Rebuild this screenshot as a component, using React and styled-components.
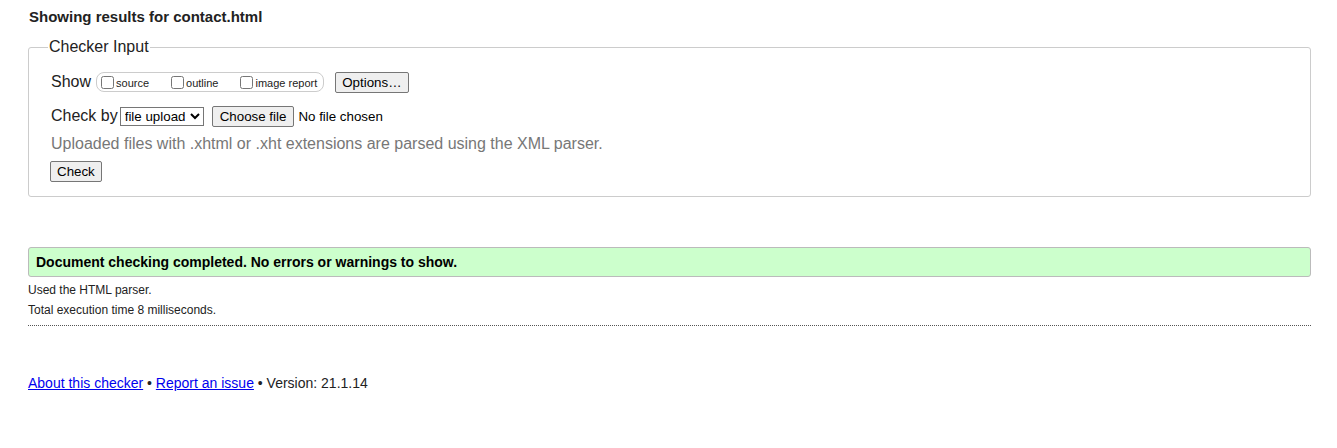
import styled, { createGlobalStyle } from 'styled-components';

const Global = createGlobalStyle`
  body {
    margin: 0;
    background: #fff;
    color: #000;
    font-family: "Liberation Sans", Arial, sans-serif;
  }
`;

const Page = styled.div`
  margin: 0 26px 0 28px;
  padding-top: 8px;
`;

const Title = styled.h2`
  margin: 0 0 0 1px;
  font-size: 15px;
  line-height: 17px;
  font-weight: bold;
  color: #222;
`;

const Fieldset = styled.fieldset`
  margin: 13px 0 0;
  padding: 15px 20px 14px 22px;
  border: 1px solid #ccc;
  border-radius: 3px;
`;

const Legend = styled.legend`
  padding: 0 1px;
  margin-left: -3px;
  font-size: 16px;
  line-height: 18px;
  color: #222;
`;

const Row = styled.div`
  display: flex;
  align-items: center;
  height: ${(p) => p.h || 22}px;
  margin-top: ${(p) => p.mt || 0}px;
`;

const Label = styled.span`
  font-size: 16px;
  color: #222;
  margin-right: ${(p) => p.mr || 3}px;
`;

const Pill = styled.span`
  display: flex;
  align-items: center;
  height: 17px;
  border: 1px solid #ccc;
  border-radius: 8px;
  padding: 1px 6px 0 0;
  margin-left: 2px;
`;

const Check = styled.label`
  display: flex;
  align-items: center;
  font-size: 11px;
  color: #222;
  margin-right: ${(p) => p.mr || 0}px;
  input {
    margin: 0 2px 0 4px;
    width: 13px;
    height: 13px;
  }
`;

const Button = styled.button`
  font-family: "Liberation Sans", Arial, sans-serif;
  font-size: 13.33px;
  color: #000;
  background: #efefef;
  border: 1px solid #767676;
  border-radius: 2px;
  height: ${(p) => p.h || 21}px;
  padding: 0 ${(p) => p.px || 6}px;
  margin-left: ${(p) => p.ml || 0}px;
`;

const Select = styled.select`
  font-family: "Liberation Sans", Arial, sans-serif;
  font-size: 13.33px;
  color: #000;
  height: 19px;
  width: 84px;
  border: 1px solid #767676;
  border-radius: 0;
  background: #fff;
  padding: 0;
`;

const FileText = styled.span`
  font-size: 13.33px;
  color: #000;
  margin-left: 4px;
`;

const Hint = styled.p`
  margin: 8px 0 0;
  font-size: 16px;
  line-height: 18px;
  color: #777;
`;

const Success = styled.div`
  margin-top: 50px;
  padding: 0 7px;
  height: 28px;
  display: flex;
  align-items: center;
  background: #ccffcc;
  border: 1px solid #bbb;
  border-radius: 3px;
  font-size: 14px;
  font-weight: bold;
  color: #000;
`;

const Note = styled.p`
  margin: 0;
  font-size: 12px;
  line-height: 20px;
  color: #222;
`;

const Notes = styled.div`
  margin-top: 3px;
  padding-bottom: 5px;
  border-bottom: 1px dotted #555;
`;

const Footer = styled.p`
  margin: 49px 0 0;
  font-size: 14px;
  line-height: 16px;
  color: #222;
  a {
    color: #00e;
    text-decoration: underline;
  }
`;

export default function App() {
  return (
    <>
      <Global />
      <Page>
        <Title>Showing results for contact.html</Title>
        <Fieldset>
          <Legend>Checker Input</Legend>
          <Row>
            <Label>Show</Label>
            <Pill>
              <Check mr={18}>
                <input type="checkbox" />
                source
              </Check>
              <Check mr={18}>
                <input type="checkbox" />
                outline
              </Check>
              <Check>
                <input type="checkbox" />
                image report
              </Check>
            </Pill>
            <Button ml={11}>Options…</Button>
          </Row>
          <Row mt={12}>
            <Label mr={2}>Check by</Label>
            <Select defaultValue="file">
              <option value="file">file upload</option>
            </Select>
            <Button ml={8} px={7}>Choose file</Button>
            <FileText>No file chosen</FileText>
          </Row>
          <Hint>Uploaded files with .xhtml or .xht extensions are parsed using the XML parser.</Hint>
          <Row mt={8} h={21}>
            <Button ml={-1}>Check</Button>
          </Row>
        </Fieldset>
        <Success>Document checking completed. No errors or warnings to show.</Success>
        <Notes>
          <Note>Used the HTML parser.</Note>
          <Note>Total execution time 8 milliseconds.</Note>
        </Notes>
        <Footer>
          <a href="#about">About this checker</a> • <a href="#issue">Report an issue</a> • Version: 21.1.14
        </Footer>
      </Page>
    </>
  );
}
